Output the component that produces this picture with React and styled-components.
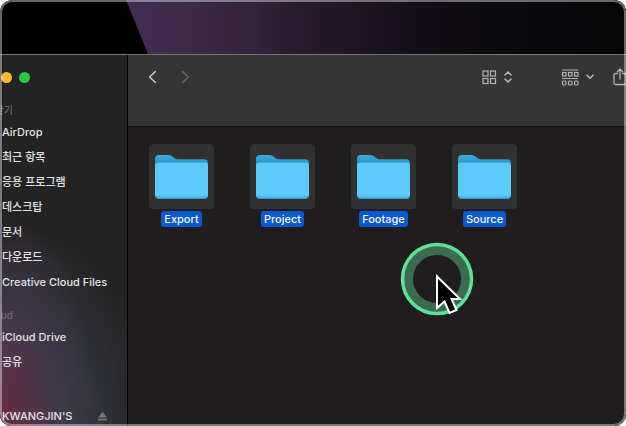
import styled, { createGlobalStyle } from "styled-components";

const favorites = [
  "AirDrop",
  "최근 항목",
  "응용 프로그램",
  "데스크탑",
  "문서",
  "다운로드",
  "Creative Cloud Files",
];
const cloudItems = ["iCloud Drive", "공유"];
const folders = ["Export", "Project", "Footage", "Source"];

const FolderIcon = () => (
  <svg width="55" height="46" viewBox="0 0 55 46" aria-hidden="true">
    <defs>
      <linearGradient id="folderBack" x1="0" y1="0" x2="0" y2="1">
        <stop offset="0" stopColor="#3aafdf" />
        <stop offset="0.2" stopColor="#2691bf" />
        <stop offset="1" stopColor="#2691bf" />
      </linearGradient>
      <linearGradient id="folderFront" x1="0" y1="0" x2="0" y2="1">
        <stop offset="0" stopColor="#5cc9fa" />
        <stop offset="0.88" stopColor="#5ccbfd" />
        <stop offset="1" stopColor="#43a9da" />
      </linearGradient>
    </defs>
    <path
      d="M1 5Q1 1 5 1H14Q17 1 19 3L21 4.500Q22 5.300 24 5.300H50Q54 5.300 54 9V40Q54 44 50 44H5Q1 44 1 40Z"
      fill="url(#folderBack)"
    />
    <path d="M1 11.500Q1 8.500 4 8.500H51Q54 8.500 54 11.500V41Q54 45 50 45H5Q1 45 1 41Z" fill="url(#folderFront)" />
    <path d="M2 42.500Q3 44.500 5 44.500H50Q52 44.500 53 42.500" fill="none" stroke="#3699ca" />
  </svg>
);

const Chevron = ({ flip }) => (
  <svg width="9" height="14" viewBox="0 0 9 14" aria-hidden="true">
    <path
      d={flip ? "M1.500 1.500L7.500 7L1.500 12.500" : "M7.500 1.500L1.500 7L7.500 12.500"}
      fill="none"
      stroke="currentColor"
      strokeWidth="1.400"
      strokeLinecap="round"
      strokeLinejoin="round"
    />
  </svg>
);

const GridIcon = () => (
  <svg
    width="15"
    height="15"
    viewBox="0 0 15 15"
    fill="none"
    stroke="currentColor"
    strokeWidth="1.200"
    aria-hidden="true"
  >
    <rect x="1" y="1" width="5" height="5" />
    <rect x="8.500" y="1" width="5" height="5" />
    <rect x="1" y="8.500" width="5" height="5" />
    <rect x="8.500" y="8.500" width="5" height="5" />
  </svg>
);

const UpDownIcon = () => (
  <svg
    width="8"
    height="12"
    viewBox="0 0 8 12"
    fill="none"
    stroke="currentColor"
    strokeWidth="1.600"
    strokeLinecap="round"
    strokeLinejoin="round"
    aria-hidden="true"
  >
    <path d="M1 4L4 1L7 4M1 8L4 11L7 8" />
  </svg>
);

const GroupIcon = () => (
  <svg
    width="18"
    height="17"
    viewBox="0 0 18 17"
    fill="none"
    stroke="currentColor"
    strokeWidth="1.200"
    aria-hidden="true"
  >
    <path d="M1 1H17M1 9.500H17" />
    <rect x="1.500" y="3.500" width="3.500" height="3.500" />
    <rect x="7.500" y="3.500" width="3.500" height="3.500" />
    <rect x="13.500" y="3.500" width="3.500" height="3.500" />
    <rect x="1.500" y="12" width="3.500" height="4" rx="1" />
    <rect x="7.500" y="12" width="3.500" height="4" rx="1" />
    <rect x="13.500" y="12" width="3.500" height="4" rx="1" />
  </svg>
);

const DownIcon = () => (
  <svg width="8" height="6" viewBox="0 0 8 6" aria-hidden="true">
    <path
      d="M1 1.300L4 4.300L7 1.300"
      fill="none"
      stroke="currentColor"
      strokeWidth="1.600"
      strokeLinecap="round"
      strokeLinejoin="round"
    />
  </svg>
);

const ShareIcon = () => (
  <svg
    width="14"
    height="19"
    viewBox="0 0 14 19"
    fill="none"
    stroke="currentColor"
    strokeWidth="1.300"
    strokeLinecap="round"
    strokeLinejoin="round"
    aria-hidden="true"
  >
    <path d="M4.500 5.500H2.500Q1 5.500 1 7V15Q1 16.500 2.500 16.500H11.500Q13 16.500 13 15V7Q13 5.500 11.500 5.500H9.500" />
    <path d="M7 11V1M4.300 3.700L7 1L9.700 3.700" />
  </svg>
);

const App = () => {
  return (
    <>
      <GlobalStyle />
      <Screen>
        <Desktop>
          <Wallpaper viewBox="0 0 626 54" preserveAspectRatio="none" aria-hidden="true">
            <defs>
              <linearGradient id="wallpaper" x1="0" y1="0" x2="1" y2="0">
                <stop offset="0" stopColor="#412d52" />
                <stop offset="0.100" stopColor="#3e2b4b" />
                <stop offset="0.220" stopColor="#36243f" />
                <stop offset="0.380" stopColor="#251929" />
                <stop offset="0.540" stopColor="#170f1b" />
                <stop offset="0.700" stopColor="#0d0b10" />
                <stop offset="1" stopColor="#060506" />
              </linearGradient>
            </defs>
            <path d="M126 0H626V54H148Z" fill="url(#wallpaper)" />
          </Wallpaper>
        </Desktop>
        <Finder>
          <Sidebar>
            <Lights>
              <Light $color="#febc2e" aria-label="Minimize" />
              <Light $color="#28c840" aria-label="Zoom" />
            </Lights>
            <Heading>찾기</Heading>
            <List>
              {favorites.map((name) => (
                <li key={name}>
                  <Place href="#">{name}</Place>
                </li>
              ))}
            </List>
            <Heading>ud</Heading>
            <List>
              {cloudItems.map((name) => (
                <li key={name}>
                  <Place href="#">{name}</Place>
                </li>
              ))}
            </List>
            <Volume>
              <Place href="#">KWANGJIN'S</Place>
              <IconButton aria-label="Eject" $color="#77757c">
                <svg width="9" height="9" viewBox="0 0 9 9" fill="currentColor" aria-hidden="true">
                  <path d="M4.500 0L9 5.500H0Z" />
                  <rect y="6.700" width="9" height="1.800" />
                </svg>
              </IconButton>
            </Volume>
          </Sidebar>
          <Content>
            <Toolbar>
              <History>
                <IconButton aria-label="Back" $color="#d2d2d2">
                  <Chevron />
                </IconButton>
                <IconButton aria-label="Forward" $color="#666666">
                  <Chevron flip />
                </IconButton>
              </History>
              <Tools>
                <IconButton aria-label="View">
                  <GridIcon />
                  <UpDownIcon />
                </IconButton>
                <IconButton aria-label="Group">
                  <GroupIcon />
                  <DownIcon />
                </IconButton>
                <IconButton aria-label="Share">
                  <ShareIcon />
                </IconButton>
              </Tools>
            </Toolbar>
            <Files>
              {folders.map((name) => (
                <Folder key={name}>
                  <Tile>
                    <FolderIcon />
                  </Tile>
                  <FolderName>{name}</FolderName>
                </Folder>
              ))}
              <Pointer width="74" height="84" viewBox="0 0 74 84" aria-hidden="true">
                <circle cx="37" cy="37" r="29" fill="none" stroke="#3b6c50" strokeWidth="10" />
                <circle cx="37" cy="37" r="34.500" fill="none" stroke="#5fe09a" strokeWidth="3.500" />
                <path
                  d="M37 34.500V66L44.500 59.500L49.500 71L56.500 68L51.500 57H60Z"
                  fill="#000000"
                  stroke="#ffffff"
                  strokeWidth="2"
                />
              </Pointer>
            </Files>
          </Content>
        </Finder>
        <Rim />
      </Screen>
    </>
  );
};

export default App;

const GlobalStyle = createGlobalStyle`
  * {
    box-sizing: border-box;
  }

  body {
    margin: 0;
    background: #ffffff;
    font-family: Inter, "Noto Sans CJK KR", sans-serif;
  }
`;

const Screen = styled.div`
  position: relative;
  min-height: 100vh;
  display: flex;
  flex-direction: column;
  overflow: hidden;
  border-radius: 12px;
  background: #000000;
`;

const Desktop = styled.div`
  display: flex;
  height: 54px;
`;

const Wallpaper = styled.svg`
  width: 100%;
  height: 100%;
`;

const Finder = styled.main`
  flex: 1;
  display: flex;
  border-top: 1px solid #777777;
`;

const Sidebar = styled.nav`
  width: 128px;
  flex-shrink: 0;
  display: flex;
  flex-direction: column;
  padding: 17px 0 0 2px;
  border-right: 1px solid #000000;
  background:
    radial-gradient(ellipse 60px 100px at 0 100%, #662a40 0%, rgba(102, 42, 64, 0) 100%),
    radial-gradient(ellipse 90px 180px at 0 90%, rgba(84, 58, 88, 0.9) 0%, rgba(70, 56, 76, 0.6) 50%, rgba(50, 50, 60, 0) 100%),
    radial-gradient(ellipse 130px 200px at 25px 100%, #40404e 0%, rgba(58, 60, 72, 0.7) 50%, rgba(34, 35, 36, 0) 100%),
    #232323;
`;

const Lights = styled.div`
  display: flex;
  gap: 7px;
  margin: 0 0 17px -1px;
`;

const Light = styled.button`
  width: 11px;
  height: 11px;
  padding: 0;
  border: none;
  border-radius: 50%;
  background: ${(props) => props.$color};
`;

const Heading = styled.h2`
  width: 11px;
  display: flex;
  justify-content: flex-end;
  margin: 0;
  font-size: 10px;
  font-weight: 500;
  line-height: 20px;
  white-space: nowrap;
  color: #6b696e;
`;

const List = styled.ul`
  margin: 0 0 10px;
  padding: 0;
  list-style: none;
`;

const Place = styled.a`
  display: block;
  font-size: 11px;
  font-weight: 500;
  line-height: 25px;
  white-space: nowrap;
  color: #e4e2e6;
  text-decoration: none;
`;

const Volume = styled.div`
  display: flex;
  align-items: center;
  justify-content: space-between;
  margin: auto 20px -3px 0;
`;

const IconButton = styled.button`
  display: flex;
  align-items: center;
  gap: 7px;
  padding: 0;
  border: none;
  background: none;
  color: ${(props) => props.$color || "#b4b4b4"};
`;

const Content = styled.section`
  flex: 1;
  min-width: 0;
  display: flex;
  flex-direction: column;
  background: #1f1d1e;
`;

const Toolbar = styled.header`
  height: 72px;
  display: flex;
  align-items: flex-start;
  justify-content: space-between;
  padding: 0 0 0 20px;
  border-bottom: 1px solid #151515;
  background: #353535;
`;

const History = styled.div`
  height: 44px;
  display: flex;
  align-items: center;
  gap: 24px;
`;

const Tools = styled.div`
  height: 44px;
  display: flex;
  align-items: center;
  gap: 49px;
  margin-right: -1px;

  button:last-child {
    margin-left: -30px;
  }
`;

const Files = styled.div`
  position: relative;
  flex: 1;
  display: flex;
  align-items: flex-start;
  gap: 36px;
  padding: 17px 21px;
`;

const Folder = styled.div`
  display: flex;
  flex-direction: column;
  align-items: center;
  gap: 2px;
`;

const Tile = styled.div`
  width: 65px;
  height: 65px;
  display: flex;
  align-items: center;
  justify-content: center;
  border-radius: 4px;
  background: #323131;
`;

const FolderName = styled.span`
  padding: 0 3px;
  border-radius: 3px;
  background: #0b58d0;
  color: #f4f7ff;
  font-size: 11px;
  font-weight: 500;
  line-height: 16px;
`;

// click highlight with the arrow, floats over the file area
const Pointer = styled.svg`
  position: absolute;
  top: 115px;
  left: 272px;
`;

const Rim = styled.div`
  position: absolute;
  inset: 0;
  border: 2px solid rgba(255, 255, 255, 0.4);
  border-radius: 12px;
  pointer-events: none;
`;
